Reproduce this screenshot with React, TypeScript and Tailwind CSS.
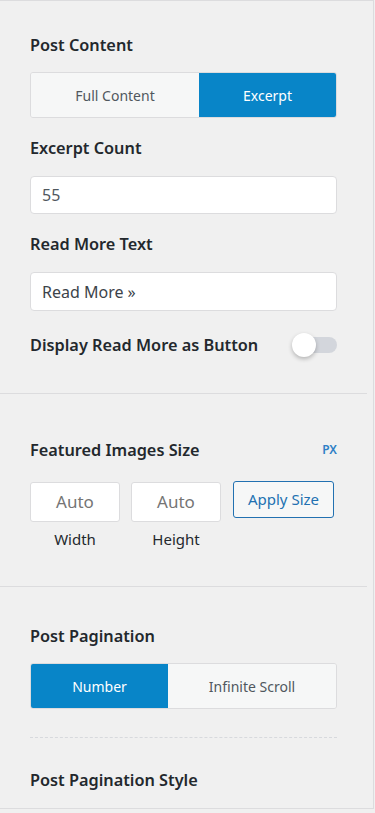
import React from "react";

const font = { fontFamily: '"Noto Sans", "Open Sans", sans-serif' };

function Label({ children }: { children: React.ReactNode }) {
  return (
    <div className="text-[16.3px] leading-[24px] font-semibold text-[#23282d]">{children}</div>
  );
}

export default function App() {
  return (
    <div style={font} className="w-[375px] h-[813px] bg-[#f0f0f0] overflow-hidden">
      <div className="w-[374px] border-t border-r border-[#dcdcde] bg-[#f0f0f0]">
        {/* Section 1 */}
        <div className="px-[30px] pt-[32px] pb-[35px] w-[367px] border-b border-[#dcdcde]">
          <div className="w-[307px]">
            <Label>Post Content</Label>
            <div className="mt-[15px] flex h-[46px] rounded-[3px] border border-[#dcdcde] overflow-hidden">
              <div className="w-[168px] flex items-center justify-center bg-[#f6f7f7] text-[14px] text-[#50575e]">
                Full Content
              </div>
              <div className="flex-1 flex items-center justify-center bg-[#0885c8] text-[14px] text-white">
                Excerpt
              </div>
            </div>
            <div className="mt-[18px]">
              <Label>Excerpt Count</Label>
            </div>
            <div className="mt-[16px] h-[38px] rounded-[4px] border border-[#dcdcde] bg-white flex items-center px-[11px] text-[16px] text-[#50575e]">
              55
            </div>
            <div className="mt-[18px]">
              <Label>Read More Text</Label>
            </div>
            <div className="mt-[16px] h-[39px] rounded-[4px] border border-[#dcdcde] bg-white flex items-center px-[11px] text-[16px] text-[#3c434a]">
              Read More »
            </div>
            <div className="mt-[21px] h-[26px] flex items-center justify-between">
              <Label>Display Read More as Button</Label>
              <div className="relative w-[45px] h-[26px]">
                <div className="absolute right-0 top-[5px] w-[37px] h-[16px] rounded-full bg-[#d3d6dc]" />
                <div className="absolute left-0 top-[1px] w-[24px] h-[24px] rounded-full bg-white shadow-[0_2px_4px_rgba(0,0,0,0.25)]" />
              </div>
            </div>
          </div>
        </div>

        {/* Section 2 */}
        <div className="px-[30px] pt-[44px] pb-[35px] w-[367px] border-b border-[#dcdcde]">
          <div className="w-[307px]">
            <div className="flex items-center justify-between">
              <Label>Featured Images Size</Label>
              <span className="text-[12px] font-semibold text-[#2f80c6]">PX</span>
            </div>
            <div className="mt-[20px] flex items-start gap-[11px]">
              <div className="flex flex-col items-center w-[90px]">
                <div className="w-[90px] h-[40px] rounded-[3px] border border-[#dcdcde] bg-white flex items-center justify-center text-[17px] text-[#757575]">
                  Auto
                </div>
                <div className="mt-[5px] text-[15px] leading-[24px] text-[#23282d]">Width</div>
              </div>
              <div className="flex flex-col items-center w-[90px]">
                <div className="w-[90px] h-[40px] rounded-[3px] border border-[#dcdcde] bg-white flex items-center justify-center text-[17px] text-[#757575]">
                  Auto
                </div>
                <div className="mt-[5px] text-[15px] leading-[24px] text-[#23282d]">Height</div>
              </div>
              <div className="ml-[1px] -mt-[1px] w-[101px] h-[37px] rounded-[3px] border border-[#2271b1] bg-[#f6f7f7] flex items-center justify-center text-[15px] text-[#2271b1]">
                Apply Size
              </div>
            </div>
          </div>
        </div>

        {/* Section 3 */}
        <div className="px-[30px] pt-[37px] pb-[16px] border-b border-[#dcdcde]">
          <div className="w-[307px]">
            <Label>Post Pagination</Label>
            <div className="mt-[15px] flex h-[46px] rounded-[3px] border border-[#dcdcde] overflow-hidden">
              <div className="w-[137px] flex items-center justify-center bg-[#0885c8] text-[14px] text-white">
                Number
              </div>
              <div className="flex-1 flex items-center justify-center bg-[#f6f7f7] text-[14px] text-[#50575e]">
                Infinite Scroll
              </div>
            </div>
            <div className="mt-[28px] border-t border-dashed border-[#d7d9dd]" />
            <div className="mt-[30px]">
              <Label>Post Pagination Style</Label>
            </div>
          </div>
        </div>
      </div>
    </div>
  );
}
